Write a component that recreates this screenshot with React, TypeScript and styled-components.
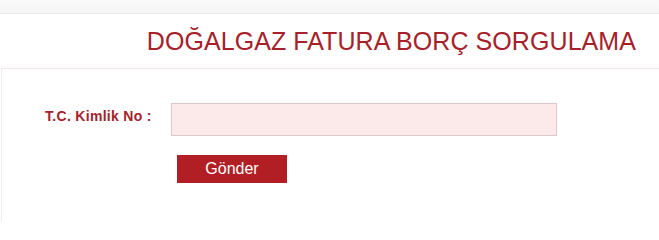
import React, { useState } from 'react'
import styled, { createGlobalStyle } from 'styled-components'

const GlobalStyle = createGlobalStyle`
  html, body {
    margin: 0;
    padding: 0;
    background: #fff;
    font-family: 'Liberation Sans', Arial, sans-serif;
  }
`

const App = () => {
  const [tcNo, setTcNo] = useState('')

  return (
    <Page>
      <GlobalStyle />
      <TopStrip />
      <Header>
        <Title>DOĞALGAZ FATURA BORÇ SORGULAMA</Title>
      </Header>
      <Panel>
        <FormRow>
          <Label htmlFor='tcno'>T.C. Kimlik No :</Label>
          <Input
            id='tcno'
            value={tcNo}
            onChange={e => setTcNo(e.target.value)}
          />
        </FormRow>
        <Actions>
          <SubmitButton type='button'>Gönder</SubmitButton>
        </Actions>
      </Panel>
    </Page>
  )
}

const Page = styled.div`
  width: 659px;
  height: 221px;
  overflow: hidden;
  background: #fff;
`

const TopStrip = styled.div`
  height: 13px;
  background: linear-gradient(#fbfbfb, #f5f5f5);
  border-bottom: 1px solid #e9e9e9;
`

const Header = styled.div`
  height: 54px;
  padding: 12px 23px 0 0;
  box-sizing: border-box;
  display: flex;
  justify-content: flex-end;
  align-items: flex-start;
`

const Title = styled.h1`
  margin: 0;
  font-size: 25px;
  line-height: 30px;
  font-weight: normal;
  letter-spacing: 0.07px;
  color: #a6212a;
`

const Panel = styled.div`
  margin-left: 1px;
  height: 153px;
  border-top: 1px solid #f1e9e9;
  border-left: 1px solid #f1ecec;
  padding: 34px 0 0 43px;
  box-sizing: border-box;
`

const FormRow = styled.div`
  display: flex;
  align-items: flex-start;
`

const Label = styled.label`
  width: 126px;
  padding-top: 5px;
  font-size: 14px;
  line-height: 16px;
  font-weight: bold;
  letter-spacing: 0.3px;
  color: #a3222b;
`

const Input = styled.input`
  width: 386px;
  height: 33px;
  box-sizing: border-box;
  margin: 0;
  background: #fce9e9;
  border: 1px solid #dcc8c9;
  outline: none;
  padding: 0 6px;
  font-family: inherit;
  font-size: 14px;
`

const Actions = styled.div`
  padding: 19px 0 0 132px;
`

const SubmitButton = styled.button`
  width: 110px;
  height: 28px;
  margin: 0;
  padding: 0;
  border: none;
  border-radius: 0;
  background: #b11f25;
  color: #fff;
  font-family: inherit;
  font-size: 16px;
  cursor: pointer;
`

export default App
